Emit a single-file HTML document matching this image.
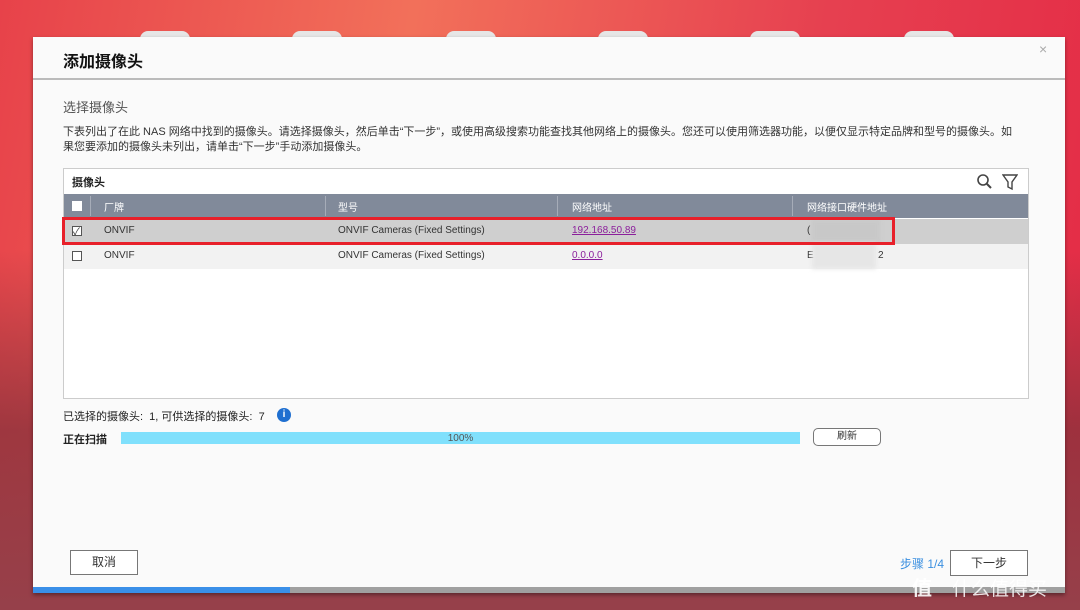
<!DOCTYPE html>
<html><head><meta charset="utf-8"><style>
*{margin:0;padding:0;box-sizing:border-box}
body{width:1080px;height:610px;overflow:hidden;position:relative;font-family:"Liberation Sans","Noto Sans CJK SC",sans-serif;background:linear-gradient(100deg,#e7424a 0%,#f2705a 35%,#e64050 70%,#e42a45 100%)}
.bot{position:absolute;left:0;right:0;top:250px;bottom:0;background:linear-gradient(180deg,rgba(140,50,60,0) 0%,rgba(140,50,60,.8) 50%,#96404a 100%)}
.tab{position:absolute;top:31px;width:50px;height:14px;border-radius:8px 8px 0 0;background:#e6e6e6}
.dlg{position:absolute;left:33px;top:37px;width:1032px;height:556px;background:#fafafa;box-shadow:0 2px 4px rgba(0,0,0,.4)}
.t{position:absolute;font-size:11px;color:#222;white-space:nowrap}
.tbl{position:absolute;left:30px;top:131px;width:966px;height:231px;border:1px solid #ccc;background:#fff}
.hd{position:absolute;left:0;right:0;top:25px;height:24px;background:#818a9a;color:#fff;font-size:10px}
.hd span{position:absolute;top:5px}
.r span{position:absolute;top:6px}
.col{position:absolute;top:2px;bottom:2px;width:1px;background:#a6acb8}
.r{position:absolute;left:0;right:0;height:25px;font-size:10px;color:#333}
.cb{position:absolute;left:8px;top:7px;width:10px;height:10px;border:1px solid #555;background:#fff}
a{color:#8b1f9b;text-decoration:underline}
.btn{position:absolute;border:1px solid #777;background:#fff;font-size:12px;color:#333;text-align:center}
</style></head><body>
<div class="bot"></div>
<div class="tab" style="left:140px"></div><div class="tab" style="left:292px"></div><div class="tab" style="left:446px"></div><div class="tab" style="left:598px"></div><div class="tab" style="left:750px"></div><div class="tab" style="left:904px"></div>
<div class="dlg">
<div class="t" style="left:30px;top:11px;font-size:16px;font-weight:bold;color:#111">添加摄像头</div>
<div class="t" style="left:1006px;top:4px;font-size:14px;color:#aaa">×</div>
<div style="position:absolute;left:0;right:0;top:41px;height:2px;background:#bbb"></div>
<div class="t" style="left:30px;top:60px;font-size:13px;color:#555">选择摄像头</div>
<div class="t" style="left:30px;top:86px;font-size:11px;color:#333">下表列出了在此 NAS 网络中找到的摄像头。请选择摄像头，然后单击“下一步”，或使用高级搜索功能查找其他网络上的摄像头。您还可以使用筛选器功能，以便仅显示特定品牌和型号的摄像头。如</div>
<div class="t" style="left:30px;top:101px;font-size:11px;color:#333">果您要添加的摄像头未列出，请单击“下一步”手动添加摄像头。</div>
<div class="tbl">
<div class="t" style="left:8px;top:5px;font-size:11px;font-weight:bold">摄像头</div>
<svg style="position:absolute;left:912px;top:4px" width="18" height="18"><circle cx="7" cy="7" r="5" fill="none" stroke="#444" stroke-width="1.6"/><line x1="11" y1="11" x2="15" y2="15" stroke="#444" stroke-width="2"/></svg>
<svg style="position:absolute;left:938px;top:4px" width="16" height="18"><path d="M1 2H15L10 9V16L6 14V9Z" fill="none" stroke="#444" stroke-width="1.4"/></svg>
<div class="hd"><div class="cb" style="border-color:#fff"></div><div class="col" style="left:26px"></div><span style="left:40px">厂牌</span><div class="col" style="left:261px"></div><span style="left:274px">型号</span><div class="col" style="left:493px"></div><span style="left:508px">网络地址</span><div class="col" style="left:728px"></div><span style="left:743px">网络接口硬件地址</span></div>
<div class="r" style="top:50px;background:#cfcfcf"><div class="cb"></div><span style="left:9px;top:4px;font-size:10px">✓</span><span style="left:40px">ONVIF</span><span style="left:274px">ONVIF Cameras (Fixed Settings)</span><span style="left:508px"><a>192.168.50.89</a></span><span style="left:743px">(</span><div style="position:absolute;left:748px;top:1px;width:68px;height:22px;background:#c8c8c8;filter:blur(2px)"></div></div>
<div class="r" style="top:75px;background:#f2f2f2"><div class="cb"></div><span style="left:40px">ONVIF</span><span style="left:274px">ONVIF Cameras (Fixed Settings)</span><span style="left:508px"><a>0.0.0.0</a></span><span style="left:743px">E</span><span style="left:814px">2</span><div style="position:absolute;left:748px;top:-1px;width:64px;height:26px;background:#e6e6e6;filter:blur(2px)"></div></div>
</div>
<div style="position:absolute;left:29px;top:180px;width:833px;height:28px;border:3px solid #e8202a"></div>
<div class="t" style="left:30px;top:371px;font-size:11px">已选择的摄像头:&nbsp; 1, 可供选择的摄像头:&nbsp; 7</div>
<div style="position:absolute;left:244px;top:371px;width:14px;height:14px;border-radius:50%;background:#1f6fd0;color:#fff;font-size:10px;font-weight:bold;text-align:center;line-height:14px">i</div>
<div class="t" style="left:30px;top:394px;font-size:11px;font-weight:bold">正在扫描</div>
<div style="position:absolute;left:88px;top:395px;width:679px;height:12px;background:#80e0fc;font-size:10px;color:#555;text-align:center;line-height:13px">100%</div>
<div class="btn" style="left:780px;top:391px;width:68px;height:18px;border-radius:5px;font-size:10px;line-height:16px">刷新</div>
<div class="btn" style="left:37px;top:513px;width:68px;height:25px;line-height:23px">取消</div>
<div class="t" style="left:867px;top:518px;font-size:12px;color:#3a8fe0">步骤 1/4</div>
<div class="btn" style="left:917px;top:513px;width:78px;height:26px;line-height:24px">下一步</div>
<div style="position:absolute;left:0;bottom:0;width:1032px;height:6px;background:#a0a0a0"></div>
<div style="position:absolute;left:0;bottom:0;width:257px;height:6px;background:#3a8fe8"></div>
</div>
<div class="t" style="left:912px;top:572px;font-size:20px;color:rgba(255,255,255,.9);font-weight:bold">值</div>
<div class="t" style="left:952px;top:574px;font-size:19px;color:rgba(255,255,255,.85)">什么值得买</div>
</body></html>
